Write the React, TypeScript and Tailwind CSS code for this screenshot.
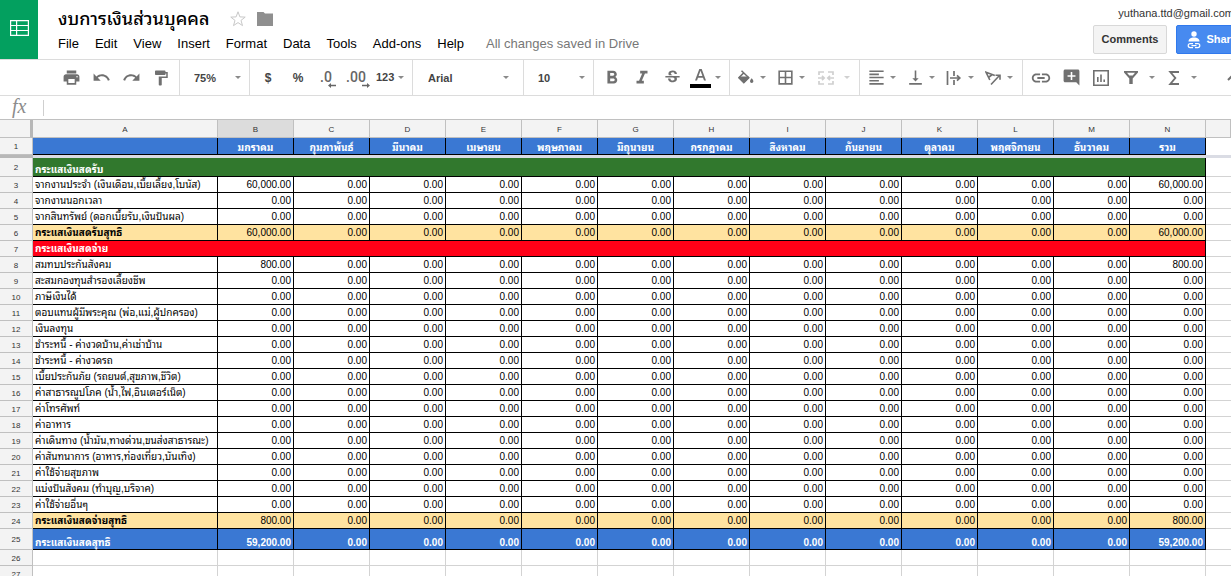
import React from 'react';
import {
  MdAddComment,
  MdBorderAll,
  MdFolder,
  MdFormatAlignLeft,
  MdFormatBold,
  MdFormatItalic,
  MdFormatPaint,
  MdLink,
  MdPrint,
  MdRedo,
  MdStrikethroughS,
  MdUndo,
  MdVerticalAlignBottom,
} from 'react-icons/md';

type RowKind = 'income' | 'expense' | 'item' | 'subtotal' | 'total' | 'blank';

interface SheetRow {
  kind: RowKind;
  label: string;
  first?: string;
}

const columns = ['A', 'B', 'C', 'D', 'E', 'F', 'G', 'H', 'I', 'J', 'K', 'L', 'M', 'N'];

const months = [
  'มกราคม',
  'กุมภาพันธ์',
  'มีนาคม',
  'เมษายน',
  'พฤษภาคม',
  'มิถุนายน',
  'กรกฎาคม',
  'สิงหาคม',
  'กันยายน',
  'ตุลาคม',
  'พฤศจิกายน',
  'ธันวาคม',
];

const rows: SheetRow[] = [
  { kind: 'income', label: 'กระแสเงินสดรับ' },
  { kind: 'item', label: 'จากงานประจำ (เงินเดือน,เบี้ยเลี้ยง,โบนัส)', first: '60,000.00' },
  { kind: 'item', label: 'จากงานนอกเวลา' },
  { kind: 'item', label: 'จากสินทรัพย์ (ดอกเบี้ยรับ,เงินปันผล)' },
  { kind: 'subtotal', label: 'กระแสเงินสดรับสุทธิ', first: '60,000.00' },
  { kind: 'expense', label: 'กระแสเงินสดจ่าย' },
  { kind: 'item', label: 'สมทบประกันสังคม', first: '800.00' },
  { kind: 'item', label: 'สะสมกองทุนสำรองเลี้ยงชีพ' },
  { kind: 'item', label: 'ภาษีเงินได้' },
  { kind: 'item', label: 'ตอบแทนผู้มีพระคุณ (พ่อ,แม่,ผู้ปกครอง)' },
  { kind: 'item', label: 'เงินลงทุน' },
  { kind: 'item', label: 'ชำระหนี้ - ค่างวดบ้าน,ค่าเช่าบ้าน' },
  { kind: 'item', label: 'ชำระหนี้ - ค่างวดรถ' },
  { kind: 'item', label: 'เบี้ยประกันภัย (รถยนต์,สุขภาพ,ชีวิต)' },
  { kind: 'item', label: 'ค่าสาธารณูปโภค (น้ำ,ไฟ,อินเตอร์เน็ต)' },
  { kind: 'item', label: 'ค่าโทรศัพท์' },
  { kind: 'item', label: 'ค่าอาหาร' },
  { kind: 'item', label: 'ค่าเดินทาง (น้ำมัน,ทางด่วน,ขนส่งสาธารณะ)' },
  { kind: 'item', label: 'ค่าสันทนาการ (อาหาร,ท่องเที่ยว,บันเทิง)' },
  { kind: 'item', label: 'ค่าใช้จ่ายสุขภาพ' },
  { kind: 'item', label: 'แบ่งปันสังคม (ทำบุญ,บริจาค)' },
  { kind: 'item', label: 'ค่าใช้จ่ายอื่นๆ' },
  { kind: 'subtotal', label: 'กระแสเงินสดจ่ายสุทธิ', first: '800.00' },
  { kind: 'total', label: 'กระแสเงินสดสุทธิ', first: '59,200.00' },
  { kind: 'blank', label: '' },
  { kind: 'blank', label: '' },
];

const rowHeight: Record<RowKind, string> = {
  income: 'h-[19px]',
  expense: 'h-4',
  item: 'h-4',
  subtotal: 'h-4',
  total: 'h-[21px]',
  blank: 'h-4',
};

const cellTone: Record<RowKind, string> = {
  income: 'border-black bg-[#31782d] text-white font-bold leading-[13px]',
  expense: 'border-black bg-[#ff0017] text-white font-bold',
  item: 'border-black bg-white text-black',
  subtotal: 'border-black bg-[#ffe3a0] text-black',
  total: 'border-black bg-[#3a78d3] text-white font-bold leading-[13px]',
  blank: 'border-[#d3d3d3] bg-white text-black',
};

const headCell = 'border-b border-r border-[#c0c0c0] bg-[#f3f3f3] px-0 pt-0.5 pb-0 text-center align-middle text-[8px] leading-3 font-normal text-[#333]';

function Caret({ faded = false }: { faded?: boolean }) {
  return (
    <svg viewBox="0 0 6 3" className={faded ? 'h-[3px] w-1.5 shrink-0 fill-[#d0d0d0]' : 'h-[3px] w-1.5 shrink-0 fill-[#8a8a8a]'} aria-hidden="true">
      <path d="M0 0h6L3 3z" />
    </svg>
  );
}

function Group({ className, children }: { className: string; children: React.ReactNode }) {
  return <div className={`flex shrink-0 items-center border-r border-[#dcdcdc] ${className}`}>{children}</div>;
}

function Tool({ label, children }: { label: string; children: React.ReactNode }) {
  return (
    <button type="button" aria-label={label} className="flex h-full w-[30px] shrink-0 items-center justify-center">
      {children}
    </button>
  );
}

function MenuTool({ label, children }: { label: string; children: React.ReactNode }) {
  return (
    <button type="button" aria-label={label} className="flex h-full w-[39px] shrink-0 items-center gap-1">
      <span className="flex w-5 justify-center">{children}</span>
      <Caret />
    </button>
  );
}

function Picker({ label, options }: { label: string; options: string[] }) {
  return (
    <label className="grid w-full items-center">
      <select aria-label={label} className="col-start-1 row-start-1 w-full appearance-none bg-transparent text-[11px] leading-4 font-bold text-[#444] outline-none">
        {options.map((option) => (
          <option key={option}>{option}</option>
        ))}
      </select>
      <span className="pointer-events-none col-start-1 row-start-1 justify-self-end">
        <Caret />
      </span>
    </label>
  );
}

function Header() {
  const menus = ['File', 'Edit', 'View', 'Insert', 'Format', 'Data', 'Tools', 'Add-ons', 'Help'];
  return (
    <header className="flex h-[60px] min-w-[1264px] shrink-0 border-b border-[#dcdcdc]">
      <a href="#home" aria-label="Sheets home" className="-mb-px flex h-[59px] w-[38px] items-center justify-center bg-[#03a05f]">
        <svg viewBox="0 0 19 16" className="mb-1 h-4 w-[19px] fill-none stroke-white" strokeWidth="1.2" aria-hidden="true">
          <path d="M.6.6h17.8v14.8H.6zM.6 5.5h17.8M.6 10.5h17.8M6.6.6v14.8" />
        </svg>
      </a>
      <div className="flex flex-col pt-[5px] pl-5">
        <div className="flex h-7 items-center">
          <h1 className="text-[18px] leading-7 font-medium text-black">งบการเงินส่วนบุคคล</h1>
          <button type="button" aria-label="Star" className="ml-5">
            <svg viewBox="0 0 18 18" className="size-[18px] fill-none stroke-[#c8c8c8]" aria-hidden="true">
              <path d="M9 1.8l1.900 5.100 5.300.2-4.200 3.300 1.500 5.200L9 12.600l-4.500 3 1.500-5.200-4.200-3.300 5.300-.2z" />
            </svg>
          </button>
          <button type="button" aria-label="Move to folder" className="ml-2.5">
            <svg viewBox="0 0 16 14" className="h-3.5 w-4 fill-[#8f8f8f]" aria-hidden="true">
              <path d="M0 0h6.500l1.500 1.500h8V14H0z" />
            </svg>
          </button>
        </div>
        <nav className="flex items-center gap-4 text-[13px] leading-[22px] text-black">
          {menus.map((menu) => (
            <button type="button" key={menu}>
              {menu}
            </button>
          ))}
          <span className="ml-1.5 text-[#777]">All changes saved in Drive</span>
        </nav>
      </div>
      <div className="ml-auto flex flex-col items-end gap-1 pt-1.5 pr-4">
        <button type="button" className="flex items-center gap-2 text-[11px] leading-[15px] text-[#333]">
          yuthana.ttd@gmail.com
          <Caret />
        </button>
        <div className="flex gap-[9px]">
          <button type="button" className="h-[29px] rounded-xs border border-[#d8d8d8] bg-[#f4f4f4] px-2 text-[11px] font-bold text-[#333]">
            Comments
          </button>
          <button type="button" className="flex h-[29px] items-center gap-[5px] rounded-xs border border-[#3079ed] bg-[#478af0] px-2.5 text-[11px] font-bold text-white">
            <svg viewBox="0 0 14 18" className="h-[18px] w-3.5" aria-hidden="true">
              <circle cx="7" cy="3" r="2.700" fill="#fff" />
              <path d="M1.500 10.500C1.500 7.800 4 6.600 7 6.600s5.500 1.200 5.500 3.900z" fill="#fff" />
              <path d="M6 12.600H3.200a2 2 0 0 0 0 4H6M8 12.600h2.800a2 2 0 0 1 0 4H8M4.500 14.600h5" fill="none" stroke="#fff" strokeWidth="1.200" />
            </svg>
            Share
          </button>
        </div>
      </div>
    </header>
  );
}

function DecimalTool({ label, text, arrow }: { label: string; text: string; arrow: string }) {
  return (
    <Tool label={label}>
      <span className="flex flex-col pt-1">
        <span className="pr-1 text-left font-[Roboto] text-[14px] leading-3 font-medium text-[#666]">{text}</span>
        <svg viewBox="0 0 8 5" className="h-[5px] w-2 self-end fill-[#666]" aria-hidden="true">
          <path d={arrow} />
        </svg>
      </span>
    </Tool>
  );
}

function Toolbar() {
  return (
    <div role="toolbar" aria-label="Formatting" className="flex h-9 min-w-[1264px] shrink-0 border-b border-[#dcdcdc] text-[#707070]">
      <Group className="w-[180px] pl-14">
        <Tool label="Print"><MdPrint size={19} /></Tool>
        <Tool label="Undo"><MdUndo size={19} /></Tool>
        <Tool label="Redo"><MdRedo size={19} /></Tool>
        <Tool label="Paint format"><MdFormatPaint size={18} /></Tool>
      </Group>
      <Group className="w-[70px] pr-2 pl-3.5">
        <Picker label="Zoom" options={['75%', '100%', '125%']} />
      </Group>
      <Group className="w-[163px] pl-[3px]">
        <Tool label="Format as currency"><b className="text-[12px] text-[#444]">$</b></Tool>
        <Tool label="Format as percent"><b className="text-[12px] text-[#444]">%</b></Tool>
        <DecimalTool label="Decrease decimal places" text=".0" arrow="M0 2.500 3 0v1.700h5v1.600H3V5z" />
        <DecimalTool label="Increase decimal places" text=".00" arrow="M8 2.500 5 0v1.700H0v1.600h5V5z" />
        <button type="button" className="ml-[3px] flex items-center gap-1 text-[11px] font-bold text-[#444]">
          123
          <Caret />
        </button>
      </Group>
      <Group className="w-[111px] pr-3.5 pl-[15px]">
        <Picker label="Font" options={['Arial', 'Verdana']} />
      </Group>
      <Group className="w-[70px] pr-2 pl-3.5">
        <Picker label="Font size" options={['10', '11', '12']} />
      </Group>
      <Group className="w-[136px] pl-[3px]">
        <Tool label="Bold"><MdFormatBold size={22} /></Tool>
        <Tool label="Italic"><MdFormatItalic size={22} /></Tool>
        <Tool label="Strikethrough"><MdStrikethroughS size={19} /></Tool>
        <button type="button" aria-label="Text color" className="ml-[3px] flex items-center gap-1">
          <svg viewBox="0 0 21 20" className="h-5 w-[21px]" aria-hidden="true">
            <path d="M9.300 1h2.400L16 12.500h-2l-1-2.800H8l-1 2.800H5zM8.600 8h3.800l-1.900-5.200z" fill="currentColor" />
            <path d="M0 16h21v4H0z" fill="#000" />
          </svg>
          <Caret />
        </button>
      </Group>
      <Group className="w-[130px] pl-1.5">
        <MenuTool label="Fill color">
          <svg viewBox="0 0 16 16" className="size-4" aria-hidden="true">
            <path d="M3.500.8l7.300 7-5 5-5-5 4.700-4.700" fill="none" stroke="currentColor" strokeWidth="1.500" />
            <path d="M1 6.500h9.500l.5 1.500-5 5-5-5z" fill="currentColor" />
            <path d="M13.700 8.300s-1.700 1.800-1.700 2.900a1.700 1.700 0 0 0 3.400 0c0-1.100-1.700-2.900-1.700-2.900z" fill="currentColor" />
          </svg>
        </MenuTool>
        <MenuTool label="Borders"><MdBorderAll size={19} /></MenuTool>
        <button type="button" aria-label="Merge cells" disabled className="flex items-center gap-2.5 pl-1 text-[#d0d0d0]">
          <svg viewBox="0 0 16 14" className="h-3.5 w-4 fill-none stroke-current" strokeWidth="1.700" aria-hidden="true">
            <path d="M1 4V1h5M10 1h5v3M1 10v3h5M10 13h5v-3M0 7h6M16 7h-6M4 4.800 6.200 7 4 9.200M12 4.800 9.800 7l2.200 2.200" />
          </svg>
          <Caret faded />
        </button>
      </Group>
      <Group className="w-[163px] pl-1.5">
        <MenuTool label="Horizontal align"><MdFormatAlignLeft size={19} /></MenuTool>
        <MenuTool label="Vertical align"><MdVerticalAlignBottom size={19} /></MenuTool>
        <MenuTool label="Text wrapping">
          <svg viewBox="0 0 16 16" className="size-4 fill-none stroke-current" strokeWidth="1.700" aria-hidden="true">
            <path d="M1.500 1v14M8 1v5M8 10v5M4 8h10M11 5.300 13.800 8 11 10.700" />
          </svg>
        </MenuTool>
        <MenuTool label="Text rotation">
          <svg viewBox="0 0 16 16" className="size-4 fill-none stroke-current" strokeWidth="1.600" aria-hidden="true">
            <path d="M4.800 10 1 2.200l8.800 3.200M3.400 7.500 7.300 4.500M6 14.500l8-8.500M10.500 5.300H15v4.500" />
          </svg>
        </MenuTool>
      </Group>
      <div className="flex grow items-center pr-4 pl-[3px]">
        <Tool label="Insert link"><MdLink size={22} /></Tool>
        <Tool label="Insert comment"><MdAddComment size={19} /></Tool>
        <Tool label="Insert chart">
          <svg viewBox="0 0 16 16" className="size-4 fill-none stroke-current" strokeWidth="1.600" aria-hidden="true">
            <path d="M.8.8h14.400v14.400H.8zM4.800 12V7M8 12V4.500M11.200 12v-2.500" />
          </svg>
        </Tool>
        <button type="button" aria-label="Filter" className="ml-2 flex items-center gap-[11px]">
          <svg viewBox="0 0 14 13" className="h-[13px] w-3.5 fill-current" aria-hidden="true">
            <path fillRule="evenodd" d="M0 0h14v1.500L8.700 7.500V13H5.300V7.500L0 1.500zM3 1.700l2.300 2.800h3.400L11 1.700z" />
          </svg>
          <Caret />
        </button>
        <button type="button" aria-label="Functions" className="ml-[13px] flex items-center gap-[11px]">
          <svg viewBox="0 0 12 14" className="h-3.5 w-3 fill-none stroke-current" strokeWidth="1.900" aria-hidden="true">
            <path d="M11 1H2.300l5 6-5 6H11" />
          </svg>
          <Caret />
        </button>
        <button type="button" aria-label="Hide menus" className="ml-auto flex w-[30px] justify-center">
          <svg viewBox="0 0 12 7" className="h-[7px] w-3 fill-none stroke-current" strokeWidth="2" aria-hidden="true">
            <path d="M1 6l5-5 5 5" />
          </svg>
        </button>
      </div>
    </div>
  );
}

function FormulaBar() {
  return (
    <label className="flex h-6 shrink-0 items-center border-b border-[#c0c0c0] bg-white">
      <span className="w-[43px] pb-1 pl-3 font-['Liberation_Serif'] text-[20px] leading-5 text-[#8c8c8c] italic">fx</span>
      <input aria-label="Formula" className="h-4 grow border-l border-[#cfcfcf] px-1 text-[12px] outline-none" />
    </label>
  );
}

function Sheet() {
  return (
    <table className="w-full min-w-[1231px] table-fixed border-separate border-spacing-0 text-[10px] leading-[15px] whitespace-nowrap">
      <colgroup>
        <col className="w-[33px]" />
        <col className="w-[185px]" />
        {columns.slice(1).map((column) => (
          <col key={column} className="w-[76px]" />
        ))}
        <col />
      </colgroup>
      <thead>
        <tr className="h-[18px]">
          <td className="border-r-[3px] border-b border-r-[#b7b7b7] border-b-[#c0c0c0] bg-[#f3f3f3] p-0" />
          {columns.map((column) => (
            <th key={column} scope="col" className={column === 'B' ? `${headCell} bg-[#dcdcdc]!` : headCell}>
              {column}
            </th>
          ))}
          <td className={headCell} />
        </tr>
        <tr className="h-[17px]">
          <th scope="row" className={headCell}>1</th>
          {['', ...months, 'รวม'].map((name, index) => (
            <th key={index} className="border-r border-b border-black bg-[#3a78d3] p-0 text-center align-bottom leading-[13px] font-bold text-white">
              {name}
            </th>
          ))}
          <td className="bg-white p-0" />
        </tr>
        <tr className="h-[3px]" aria-hidden="true">
          <td className="bg-[#b7b7b7] p-0" />
          <td colSpan={15} className="bg-[#dadce4] p-0" />
        </tr>
      </thead>
      <tbody>
        {rows.map((row, index) => {
          const tone = cellTone[row.kind];
          const spans = row.kind === 'income' || row.kind === 'expense';
          const values = months.map((_, month) => (month === 0 && row.first ? row.first : '0.00')).concat(row.first ?? '0.00');
          return (
            <tr key={index} className={rowHeight[row.kind]}>
              <th scope="row" className={headCell}>{index + 2}</th>
              <td
                colSpan={spans ? 14 : 1}
                className={`border-r border-b py-0 pr-0 pl-0.5 align-bottom ${tone} ${row.kind === 'subtotal' ? 'font-bold' : ''}`}
              >
                {row.label}
              </td>
              {!spans &&
                values.map((value, column) => (
                  <td key={column} className={`border-r border-b py-0 pr-0.5 pl-0 text-right align-bottom ${tone}`}>
                    {row.kind === 'blank' ? '' : value}
                  </td>
                ))}
              <td className="border-b border-[#d3d3d3] bg-white p-0" />
            </tr>
          );
        })}
      </tbody>
    </table>
  );
}

export default function App() {
  return (
    <div className="flex h-screen flex-col overflow-hidden bg-white font-['Liberation_Sans','Noto_Sans_Thai_Looped','Loma','Garuda','Waree','Noto_Sans_Thai',sans-serif]">
      <Header />
      <Toolbar />
      <FormulaBar />
      <main className="min-h-0 grow overflow-hidden">
        <Sheet />
      </main>
    </div>
  );
}
